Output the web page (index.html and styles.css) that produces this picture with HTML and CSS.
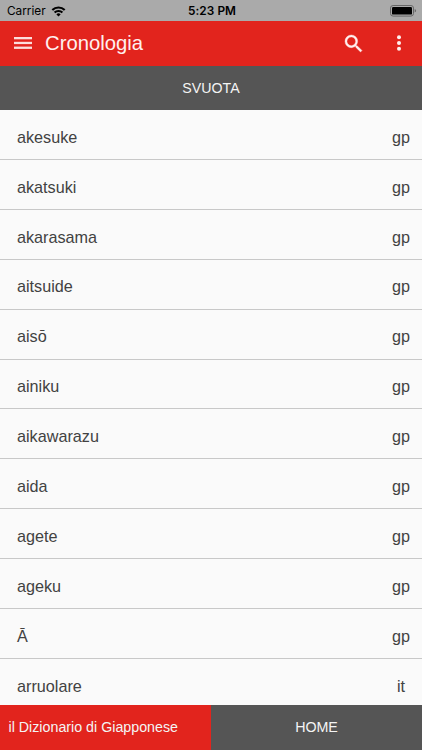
FILE: index.html
```
<!DOCTYPE html>
<html lang="it">
<head>
  <meta charset="utf-8">
  <title>Cronologia</title>
  <link rel="stylesheet" href="styles.css">
</head>
<body>
  <div class="status-bar">
    <div class="carrier">
      <span>Carrier</span>
      <svg class="wifi" viewBox="0 0 14 11" fill="none" stroke="#000" stroke-width="2.1">
        <path d="M0.8 4.1a8.8 8.8 0 0 1 12.4 0"/>
        <path d="M3.1 6.6a5.5 5.5 0 0 1 7.8 0"/>
        <path d="M7 10.4L4.9 8.4a3 3 0 0 1 4.2 0z" fill="#000" stroke="none"/>
      </svg>
    </div>
    <div class="time">5:23 PM</div>
    <svg class="battery" viewBox="0 0 27 12">
      <rect x="0.5" y="0.5" width="23" height="10.6" rx="2.6" fill="none" stroke="#666"/>
      <rect x="2" y="2" width="20" height="7.6" rx="1.2"/>
      <path d="M24.7 4v3.6q1.4-.5 1.4-1.8T24.7 4z" fill="#666"/>
    </svg>
  </div>

  <header class="toolbar">
    <svg class="menu" viewBox="0 0 18 12" fill="#fcdedc">
      <rect y="0" width="18" height="2.3"/>
      <rect y="4.8" width="18" height="2.3"/>
      <rect y="9.6" width="18" height="2.3"/>
    </svg>
    <h1>Cronologia</h1>
    <svg class="search" viewBox="3 3 17.5 17.5" fill="#fff0ef" stroke="#fff0ef" stroke-width="0.4">
      <path d="M15.5 14h-.79l-.28-.27A6.47 6.47 0 0 0 16 9.5 6.5 6.5 0 1 0 9.5 16c1.61 0 3.09-.59 4.23-1.57l.27.28v.79l5 4.99L20.49 19l-4.99-5zm-6 0C7.01 14 5 11.99 5 9.5S7.01 5 9.5 5 14 7.01 14 9.5 11.99 14 9.5 14z"/>
    </svg>
    <svg class="more" viewBox="0 0 4 16" fill="#fff0ef">
      <circle cx="2" cy="2.2" r="2"/>
      <circle cx="2" cy="8" r="2"/>
      <circle cx="2" cy="13.8" r="2"/>
    </svg>
  </header>

  <div class="clear-button">SVUOTA</div>

  <ul class="history">
    <li><span>akesuke</span><span>gp</span></li>
    <li><span>akatsuki</span><span>gp</span></li>
    <li><span>akarasama</span><span>gp</span></li>
    <li><span>aitsuide</span><span>gp</span></li>
    <li><span>aisō</span><span>gp</span></li>
    <li><span>ainiku</span><span>gp</span></li>
    <li><span>aikawarazu</span><span>gp</span></li>
    <li><span>aida</span><span>gp</span></li>
    <li><span>agete</span><span>gp</span></li>
    <li><span>ageku</span><span>gp</span></li>
    <li><span>Ā</span><span>gp</span></li>
    <li><span>arruolare</span><span class="it">it</span></li>
  </ul>

  <footer class="bottom-bar">
    <div class="app-name">il Dizionario di Giapponese</div>
    <div class="home">HOME</div>
  </footer>
</body>
</html>
```
FILE: styles.css
```
* {
  box-sizing: border-box;
}

body {
  display: flex;
  flex-direction: column;
  height: 100vh;
  margin: 0;
  overflow: hidden;
  background-color: #fafafa;
  font-family: "Liberation Sans", Arial, sans-serif;
}

.status-bar {
  display: grid;
  grid-template-columns: 1fr auto 1fr;
  align-items: center;
  flex: none;
  height: 21px;
  padding: 1px 5px 0 7px;
  background-color: #aaa;
  color: #000;
  font-family: Inter, sans-serif;
  font-size: 11.8px;
}

.carrier {
  display: flex;
  align-items: center;
  gap: 5px;
}

.wifi {
  width: 15px;
  height: 11px;
}

.time {
  font-weight: 600;
  font-size: 11.8px;
  letter-spacing: 0.1px;
}

.battery {
  justify-self: end;
  width: 27px;
  height: 12px;
}

.toolbar {
  display: flex;
  align-items: center;
  flex: none;
  height: 44.5px;
  padding: 0 21px 0 14px;
  background-color: #e2241d;
}

.menu {
  width: 18px;
  height: 12px;
}

.toolbar h1 {
  flex: 1;
  margin: 0 0 0 13px;
  color: #fff0ef;
  font-size: 20.3px;
  font-weight: normal;
}

.search {
  width: 17px;
  height: 17px;
  overflow: visible;
}

.more {
  width: 4px;
  height: 16px;
  margin-left: 35px;
}

.clear-button {
  flex: none;
  height: 44.6px;
  background-color: #555;
  color: #f4f4f4;
  font-size: 14.2px;
  line-height: 45px;
  text-align: center;
}

.history {
  flex: 1;
  min-height: 0;
  margin: 0;
  padding: 0;
  overflow: hidden;
  list-style: none;
}

.history li {
  display: flex;
  align-items: center;
  justify-content: space-between;
  height: 49.9px;
  padding: 5.4px 12px 0 17px;
  border-bottom: 1px solid #c8c8c8;
  color: #424242;
  font-size: 16.2px;
}

.history .it {
  padding-right: 5px;
}

.bottom-bar {
  display: flex;
  flex: none;
  height: 45px;
  color: #f4f4f4;
  font-size: 14.25px;
  line-height: 45px;
}

.app-name {
  width: 50%;
  padding-left: 8.5px;
  background-color: #e2241d;
}

.home {
  width: 50%;
  background-color: #555;
  text-align: center;
}
```
